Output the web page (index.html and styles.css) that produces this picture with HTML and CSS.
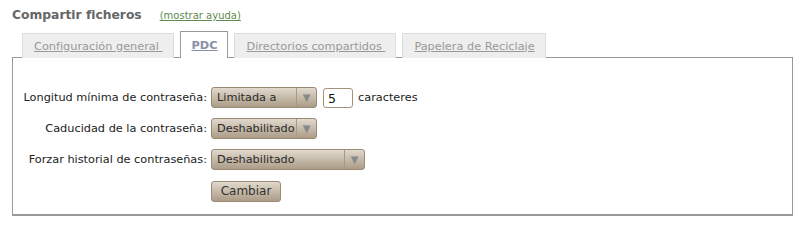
FILE: index.html
```html
<!DOCTYPE html>
<html lang="es">
<head>
<meta charset="utf-8">
<title>Compartir ficheros</title>
<link rel="stylesheet" href="styles.css">
</head>
<body>
<div class="page">
  <div class="header">
    <h1 class="title">Compartir ficheros</h1>
    <a class="help" href="#">(mostrar ayuda)</a>
  </div>
  <ul class="tabs">
    <li class="tab"><a href="#">Configuración general </a></li>
    <li class="tab active"><a href="#">PDC</a></li>
    <li class="tab"><a href="#">Directorios compartidos </a></li>
    <li class="tab"><a href="#">Papelera de Reciclaje</a></li>
  </ul>
  <div class="panel">
    <form class="form">
      <label class="label">Longitud mínima de contraseña:</label>
      <div class="field">
        <div class="select w106"><span class="sel-text">Limitada a</span><span class="arrow">▼</span></div>
        <span class="input">5</span>
        <span class="unit">caracteres</span>
      </div>
      <label class="label">Caducidad de la contraseña:</label>
      <div class="field">
        <div class="select w106"><span class="sel-text">Deshabilitado</span><span class="arrow">▼</span></div>
      </div>
      <label class="label">Forzar historial de contraseñas:</label>
      <div class="field">
        <div class="select w154"><span class="sel-text">Deshabilitado</span><span class="arrow">▼</span></div>
      </div>
      <span class="label"></span>
      <div class="field">
        <button type="button" class="button">Cambiar</button>
      </div>
    </form>
  </div>
</div>
</body>
</html>
```
FILE: styles.css
```css
html, body {
  margin: 0;
  padding: 0;
  background: #fff;
}
body {
  font-family: "DejaVu Sans", Verdana, sans-serif;
  font-size: 11.3px;
  color: #222;
}
.page {
  padding: 5px 12px 0 12px;
  width: 781px;
}
.header {
  display: flex;
  align-items: baseline;
  gap: 18px;
  height: 26px;
  padding-top: 1px;
}
.title {
  margin: 0;
  font-size: 12.3px;
  font-weight: bold;
  color: #666;
  line-height: 18px;
}
.help {
  font-size: 10px;
  color: #5f8a50;
  text-decoration: underline;
}
.tabs {
  list-style: none;
  margin: 0;
  padding: 0 0 0 10px;
  display: flex;
  align-items: flex-end;
  gap: 6px;
  height: 26px;
  position: relative;
  z-index: 1;
  margin-bottom: -1px;
}
.tab {
  height: 25px;
  box-sizing: border-box;
  border: 1px solid #ddd;
  border-bottom: none;
  background: #eee;
  padding: 0 10px 0 11px;
  display: flex;
  align-items: center;
}
.tab a {
  color: #999;
  text-decoration: underline;
  white-space: pre;
  font-size: 11.3px;
}
.tab.active {
  height: 27px;
  background: #fff;
  border: 1px solid #999;
  border-bottom: none;
  padding: 0 10px 0 11px;
}
.tab.active a {
  font-weight: bold;
  color: #8a90a8;
}
.panel {
  border: 1px solid #999;
  border-bottom-width: 2px;
  height: 159px;
  box-sizing: border-box;
  padding: 29px 0 0 10px;
}
.form {
  display: grid;
  grid-template-columns: 184px auto;
  column-gap: 4px;
  row-gap: 10px;
  align-items: center;
}
.label {
  text-align: right;
  white-space: nowrap;
  color: #222;
}
.field {
  display: flex;
  align-items: center;
  height: 21px;
}
.select {
  height: 21px;
  box-sizing: border-box;
  border: 1px solid #9a8a74;
  border-radius: 3px;
  background: linear-gradient(#e1d9cd, #ab9c87);
  display: flex;
  align-items: stretch;
}
.w106 { width: 106px; }
.w154 { width: 154px; }
.sel-text {
  flex: 1;
  padding: 3px 0 0 5px;
  color: #2a2a2a;
  overflow: hidden;
  white-space: nowrap;
}
.arrow {
  width: 19px;
  border-left: 1px solid #a89985;
  color: #888;
  font-size: 10px;
  display: flex;
  align-items: center;
  justify-content: center;
}
.input {
  margin-left: 6px;
  width: 30px;
  height: 20px;
  box-sizing: border-box;
  border: 1px solid #a4927b;
  border-radius: 3px;
  background: #fff;
  padding: 2px 0 0 4px;
  color: #111;
  font-size: 12.5px;
}
.unit {
  margin-left: 5px;
  color: #222;
}
.button {
  width: 70px;
  height: 21px;
  margin-top: 1px;
  border: 1px solid #9a8a74;
  border-radius: 3px;
  background: linear-gradient(#e1d9cd, #ab9c87);
  font-family: "DejaVu Sans", Verdana, sans-serif;
  font-size: 12px;
  color: #333;
  padding: 0;
}
```
